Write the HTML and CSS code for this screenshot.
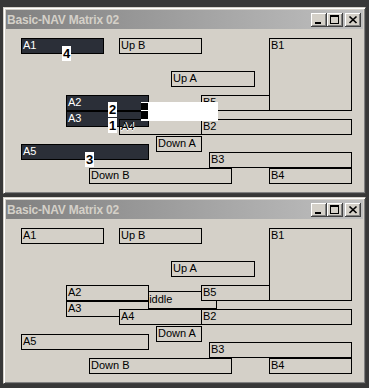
FILE: index.html
```html
<!DOCTYPE html>
<html lang="en">

<head>
    <meta charset="UTF-8">
    <title>Basic-NAV Matrix 02</title>
    <link rel="stylesheet" href="styles.css">
</head>

<body>
    <div class="win">
        <div class="titlebar">
            <span class="title">Basic-NAV Matrix 02</span>
            <div class="ctl">
                <span class="btn"><svg width="16" height="14"><rect x="4" y="9" width="6" height="2" /></svg></span>
                <span class="btn"><svg width="16" height="14"><path d="M3 2h9v9H3z M4 4v6h7V4z" fill-rule="evenodd" /></svg></span>
                <span class="btn close"><svg width="16" height="14"><path d="M4.5 3.5l7 6.5M11.5 3.5l-7 6.5" stroke="#000" stroke-width="1.7" fill="none" /></svg></span>
            </div>
        </div>
        <div class="canvas">
            <div class="node dark n-a1">A1</div>
            <div class="node n-upb">Up B</div>
            <div class="node n-b1">B1</div>
            <div class="node n-upa">Up A</div>
            <div class="node n-b5">B5</div>
            <div class="node dark n-a2">A2</div>
            <div class="node dark n-a3">A3</div>
            <div class="node see n-a4">A4</div>
            <div class="node n-b2">B2</div>
            <div class="node n-downa">Down A</div>
            <div class="node dark n-a5">A5</div>
            <div class="node n-b3">B3</div>
            <div class="node n-downb">Down B</div>
            <div class="node n-b4">B4</div>
            <div class="focus">
                <span class="mark"></span>
                <span class="mark low"></span>
            </div>
            <span class="tag t4">4</span>
            <span class="tag t2">2</span>
            <span class="tag t1">1</span>
            <span class="tag t3">3</span>
        </div>
    </div>

    <div class="win">
        <div class="titlebar">
            <span class="title">Basic-NAV Matrix 02</span>
            <div class="ctl">
                <span class="btn"><svg width="16" height="14"><rect x="4" y="9" width="6" height="2" /></svg></span>
                <span class="btn"><svg width="16" height="14"><path d="M3 2h9v9H3z M4 4v6h7V4z" fill-rule="evenodd" /></svg></span>
                <span class="btn close"><svg width="16" height="14"><path d="M4.5 3.5l7 6.5M11.5 3.5l-7 6.5" stroke="#000" stroke-width="1.7" fill="none" /></svg></span>
            </div>
        </div>
        <div class="canvas">
            <div class="node n-middle">Middle</div>
            <div class="node n-a1">A1</div>
            <div class="node n-upb">Up B</div>
            <div class="node n-b1">B1</div>
            <div class="node n-upa">Up A</div>
            <div class="node n-b5">B5</div>
            <div class="node n-a2">A2</div>
            <div class="node n-a3">A3</div>
            <div class="node n-a4">A4</div>
            <div class="node n-b2">B2</div>
            <div class="node n-downa">Down A</div>
            <div class="node n-a5">A5</div>
            <div class="node n-b3">B3</div>
            <div class="node n-downb">Down B</div>
            <div class="node n-b4">B4</div>
        </div>
    </div>
</body>

</html>
```

FILE: styles.css
```css
body {
    margin: 0;
    padding: 7px 3px 0;
    background-color: #383838;
    font-family: 'Liberation Sans', Arial, sans-serif;
    font-size: 11px;
}

.win {
    width: 363px;
    margin-bottom: 3px;
    padding: 2px;
    box-sizing: border-box;
    background-color: #d4d0c8;
    border: 1px solid;
    border-color: #d4d0c8 #404040 #404040 #d4d0c8;
    box-shadow: inset 1px 1px #ffffff, inset -1px -1px #808080;
}

.titlebar {
    height: 19px;
    display: flex;
    align-items: center;
    justify-content: space-between;
    padding: 0 2px 0 1px;
    background: linear-gradient(to right, #808080, #c0c0c0);
}

.title {
    color: #d4d0c8;
    font-weight: bold;
    font-size: 12px;
    letter-spacing: -0.2px;
}

.ctl {
    display: flex;
}

.btn {
    display: block;
    width: 16px;
    height: 14px;
    background-color: #d4d0c8;
    box-shadow: inset -1px -1px #404040, inset 1px 1px #ffffff, inset -2px -2px #808080;
}

.btn svg {
    display: block;
}

.btn.close {
    margin-left: 2px;
}

/* the matrix: each node sits where the layout put it */
.canvas {
    position: relative;
    height: 162px;
}

.node {
    position: absolute;
    box-sizing: border-box;
    height: 16px;
    padding-left: 1px;
    border: 1px solid #000000;
    background-color: #d4d0c8;
    color: #000000;
    line-height: 13px;
    white-space: nowrap;
    overflow: hidden;
}

.node.dark {
    background-color: #2b2f38;
    color: #ffffff;
}

.node.see {
    background-color: transparent;
    text-shadow: 1px 0 #ffffff, 0 1px #ffffff;
}

.n-a1 { left: 15px; top: 9px; width: 83px; }
.n-upb { left: 113px; top: 9px; width: 83px; }
.n-b1 { left: 263px; top: 9px; width: 83px; height: 73px; }
.n-upa { left: 165px; top: 42px; width: 84px; }
.n-b5 { left: 195px; top: 66px; width: 69px; }
.n-a2 { left: 60px; top: 66px; width: 83px; }
.n-a3 { left: 60px; top: 82px; width: 83px; }
.n-a4 { left: 113px; top: 90px; width: 83px; }
.n-b2 { left: 195px; top: 90px; width: 151px; }
.n-downa { left: 150px; top: 107px; width: 46px; }
.n-a5 { left: 15px; top: 115px; width: 128px; }
.n-b3 { left: 203px; top: 123px; width: 143px; }
.n-downb { left: 83px; top: 139px; width: 143px; }
.n-b4 { left: 263px; top: 139px; width: 83px; }
.n-middle { left: 132px; top: 72px; width: 79px; height: 18px; line-height: 15px; }

.focus {
    position: absolute;
    left: 135px;
    top: 73px;
    width: 77px;
    height: 19px;
    padding-top: 1px;
    box-sizing: border-box;
    display: flex;
    flex-direction: column;
    gap: 1px;
    background-color: #ffffff;
}

.mark {
    width: 7px;
    height: 7px;
    background-color: #000000;
}

.mark.low {
    height: 8px;
}

.tag {
    position: absolute;
    width: 9px;
    height: 15px;
    background-color: #ffffff;
    color: #000000;
    font-weight: bold;
    font-size: 13px;
    line-height: 15px;
    text-align: center;
}

.t4 { left: 56px; top: 17px; }
.t2 { left: 102px; top: 73px; }
.t1 { left: 102px; top: 89px; }
.t3 { left: 79px; top: 123px; }
```
